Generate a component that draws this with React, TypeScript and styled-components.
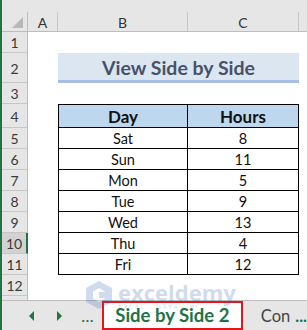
import styled, { createGlobalStyle } from "styled-components";

const GlobalStyle = createGlobalStyle`
  html, body {
    margin: 0;
    padding: 0;
    background: #e6e6e6;
  }
  body {
    font-family: "Lato", "Open Sans", sans-serif;
  }
`;

const COLS = "26px 30px 130px 111px 1fr";

export const Window = styled.div`
  position: relative;
  width: 307px;
  height: 330px;
  overflow: hidden;
  background: #e6e6e6;
  border-left: 2px solid #217346;
  box-sizing: border-box;
  display: flex;
  flex-direction: column;
`;

export const TopStrip = styled.div`
  height: 12px;
  background: #e6e6e6;
`;

export const HeaderRow = styled.div`
  display: grid;
  grid-template-columns: ${COLS};
  height: 19px;
  background: #e6e6e6;
  border-bottom: 1px solid #bdbdbd;
`;

export const Corner = styled.div`
  position: relative;
  border-right: 1px solid #bdbdbd;

  &::after {
    content: "";
    position: absolute;
    right: 4px;
    bottom: 3px;
    width: 0;
    height: 0;
    border-left: 11px solid transparent;
    border-bottom: 11px solid #b8b8b8;
  }
`;

export const ColHead = styled.div`
  display: flex;
  align-items: center;
  justify-content: center;
  border-right: 1px solid #c6c6c6;
  font-size: 14px;
  color: #333;
  padding-top: 2px;
`;

export const Row = styled.div<{ $h: number }>`
  display: grid;
  grid-template-columns: ${COLS};
  height: ${(p) => p.$h}px;
  background: #fff;
`;

export const RowHead = styled.div<{ $sel?: boolean }>`
  display: flex;
  align-items: center;
  justify-content: center;
  background: ${(p) => (p.$sel ? "#d2d2d2" : "#e6e6e6")};
  border-bottom: 1px solid #c6c6c6;
  border-right: ${(p) => (p.$sel ? "2px solid #217346" : "1px solid #bdbdbd")};
  font-size: 14px;
  color: #3a3a3a;
  box-sizing: border-box;
  padding-top: 1px;
`;

export const Blank = styled.div``;

export const TitleBand = styled.div`
  grid-column: 3 / 5;
  display: flex;
  align-items: center;
  justify-content: center;
  background: #dce6f1;
  border-bottom: 3px solid #a7bde2;
  font-size: 19.5px;
  font-weight: 700;
  color: #46526a;
  padding-top: 1px;
`;

export const Cell = styled.div<{ $head?: boolean; $first?: boolean }>`
  display: flex;
  align-items: center;
  justify-content: center;
  box-sizing: border-box;
  background: ${(p) => (p.$head ? "#bdd7ee" : "#fff")};
  border-right: 1px solid #000;
  border-bottom: 1px solid #000;
  border-left: ${(p) => (p.$first ? "1px solid #000" : "none")};
  border-top: ${(p) => (p.$head ? "1px solid #000" : "none")};
  font-size: ${(p) => (p.$head ? "17px" : "14.5px")};
  font-weight: ${(p) => (p.$head ? 700 : 400)};
  color: #111;
  padding-top: 1px;
`;

export const Stub = styled.div`
  display: grid;
  grid-template-columns: ${COLS};
  height: 4px;
  background: #fff;
  border-bottom: 1px solid #bdbdbd;

  > div:first-child {
    background: #e6e6e6;
    border-right: 1px solid #bdbdbd;
  }
`;

export const TabBar = styled.div`
  flex: 1;
  display: flex;
  align-items: flex-end;
  background: #e6e6e6;
  padding-left: 16px;
`;

export const NavBtn = styled.div`
  width: 28px;
  height: 28px;
  display: flex;
  align-items: center;
  justify-content: center;
`;

export const Arrow = styled.div<{ $dir: "left" | "right" }>`
  width: 0;
  height: 0;
  border-top: 5px solid transparent;
  border-bottom: 5px solid transparent;
  ${(p) =>
    p.$dir === "left"
      ? "border-right: 5px solid #217346;"
      : "border-left: 5px solid #217346;"}
`;

export const Dots = styled.div`
  height: 28px;
  width: 28px;
  display: flex;
  align-items: center;
  justify-content: center;
  color: #217346;
  font-size: 14px;
  font-weight: 700;
  letter-spacing: 1px;
`;

export const ActiveTab = styled.div`
  position: relative;
  height: 29px;
  width: 141px;
  box-sizing: border-box;
  background: #fff;
  border: 2px solid #e8141c;
  display: flex;
  align-items: center;
  justify-content: center;
  color: #217346;
  font-size: 18.5px;
  font-weight: 700;
  padding-bottom: 1px;
`;

export const Tab = styled.div`
  height: 28px;
  display: flex;
  align-items: center;
  padding-left: 18px;
  font-size: 16.5px;
  color: #444;
  white-space: nowrap;

  > span {
    color: #217346;
    margin-left: 5px;
    font-weight: 700;
  }
`;

export const Watermark = styled.div`
  position: absolute;
  left: 82px;
  top: 280px;
  display: flex;
  align-items: center;
  gap: 4px;
  opacity: 0.22;
  pointer-events: none;
`;

export const MarkText = styled.div`
  display: flex;
  flex-direction: column;
  line-height: 1;

  > b {
    font-size: 22px;
    color: #2f5fb3;
    font-weight: 700;
    font-family: "Open Sans", sans-serif;
  }
  > small {
    font-size: 6px;
    letter-spacing: 2px;
    color: #2f5fb3;
    margin-top: 1px;
  }
`;

const data = [
  ["Sat", "8"],
  ["Sun", "11"],
  ["Mon", "5"],
  ["Tue", "9"],
  ["Wed", "13"],
  ["Thu", "4"],
  ["Fri", "12"],
];

function Logo() {
  return (
    <svg width="30" height="30" viewBox="0 0 30 30">
      <polygon points="15,1 28,8 28,22 15,29 2,22 2,8" fill="#2f5fb3" />
      <polygon points="15,8 21,11.5 21,18.5 15,22 9,18.5 9,11.5" fill="#fff" />
      <rect x="15" y="12" width="9" height="6" fill="#2f5fb3" />
    </svg>
  );
}

export default function App() {
  return (
    <>
      <GlobalStyle />
      <Window>
        <TopStrip />
        <HeaderRow>
          <Corner />
          <ColHead>A</ColHead>
          <ColHead>B</ColHead>
          <ColHead>C</ColHead>
          <Blank />
        </HeaderRow>

        <Row $h={21}>
          <RowHead>1</RowHead>
          <Blank />
          <Blank />
          <Blank />
          <Blank />
        </Row>
        <Row $h={30}>
          <RowHead>2</RowHead>
          <Blank />
          <TitleBand>View Side by Side</TitleBand>
          <Blank />
        </Row>
        <Row $h={21}>
          <RowHead>3</RowHead>
          <Blank />
          <Blank />
          <Blank />
          <Blank />
        </Row>
        <Row $h={24}>
          <RowHead>4</RowHead>
          <Blank />
          <Cell $head $first>Day</Cell>
          <Cell $head>Hours</Cell>
          <Blank />
        </Row>
        {data.map(([day, hours], i) => (
          <Row $h={21} key={day}>
            <RowHead $sel={i + 5 === 10}>{i + 5}</RowHead>
            <Blank />
            <Cell $first>{day}</Cell>
            <Cell>{hours}</Cell>
            <Blank />
          </Row>
        ))}
        <Row $h={21}>
          <RowHead>12</RowHead>
          <Blank />
          <Blank />
          <Blank />
          <Blank />
        </Row>
        <Stub>
          <div />
        </Stub>

        <TabBar>
          <NavBtn>
            <Arrow $dir="left" />
          </NavBtn>
          <NavBtn>
            <Arrow $dir="right" />
          </NavBtn>
          <Dots>...</Dots>
          <ActiveTab>Side by Side 2</ActiveTab>
          <Tab>
            Con<span>...</span>
          </Tab>
        </TabBar>

        <Watermark>
          <Logo />
          <MarkText>
            <b>exceldemy</b>
            <small>EXCEL · DATA · BI</small>
          </MarkText>
        </Watermark>
      </Window>
    </>
  );
}
